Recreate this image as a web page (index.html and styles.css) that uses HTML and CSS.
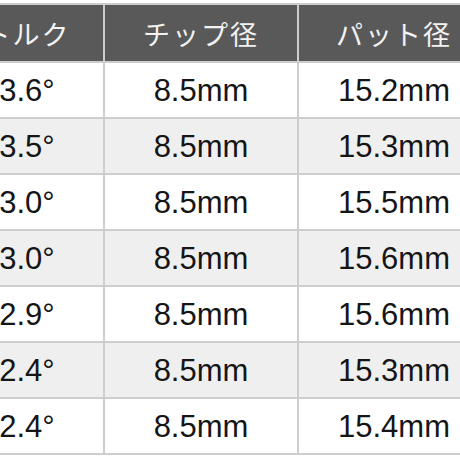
FILE: index.html
```html
<!DOCTYPE html>
<html lang="ja">
<head>
<meta charset="utf-8">
<link rel="stylesheet" href="styles.css">
</head>
<body>
<table class="spec">
  <colgroup>
    <col class="c1"><col class="c2"><col class="c3">
  </colgroup>
  <thead>
    <tr><th>トルク</th><th>チップ径</th><th>パット径</th></tr>
  </thead>
  <tbody>
    <tr><td>3.6°</td><td>8.5mm</td><td>15.2mm</td></tr>
    <tr class="alt"><td>3.5°</td><td>8.5mm</td><td>15.3mm</td></tr>
    <tr><td>3.0°</td><td>8.5mm</td><td>15.5mm</td></tr>
    <tr class="alt"><td>3.0°</td><td>8.5mm</td><td>15.6mm</td></tr>
    <tr><td>2.9°</td><td>8.5mm</td><td>15.6mm</td></tr>
    <tr class="alt"><td>2.4°</td><td>8.5mm</td><td>15.3mm</td></tr>
    <tr><td>2.4°</td><td>8.5mm</td><td>15.4mm</td></tr>
  </tbody>
</table>
</body>
</html>
```

FILE: styles.css
```css
html, body {
  margin: 0;
  padding: 0;
  background: #ffffff;
  overflow: hidden;
  width: 460px;
  height: 460px;
}

.spec {
  border-collapse: separate;
  border-spacing: 0;
  table-layout: fixed;
  width: 540px;
  margin-top: 3px;
  margin-left: -49px;
  font-family: "Liberation Sans", Arial, "Noto Sans CJK JP", sans-serif;
}

.c1 { width: 154px; }
.c2 { width: 194px; }
.c3 { width: 192px; }

.spec th,
.spec td {
  padding: 0;
  text-align: center;
  vertical-align: middle;
  border-right: 2px solid #cdcdcd;
  border-bottom: 2px solid #cdcdcd;
}

.spec th {
  border-top: 2px solid #cdcdcd;
  height: 56px;
  background: #595959;
  color: #f2f2f2;
  font-family: "Noto Sans CJK JP", "Noto Sans", sans-serif;
  font-weight: 400;
  font-size: 27px;
  letter-spacing: 2px;
}

.spec td {
  height: 54px;
  padding-top: 2px;
  box-sizing: border-box;
  height: 56px;
  font-size: 31px;
  color: #151515;
  background: #ffffff;
}

.spec tr.alt td {
  background: #efefef;
}
```
